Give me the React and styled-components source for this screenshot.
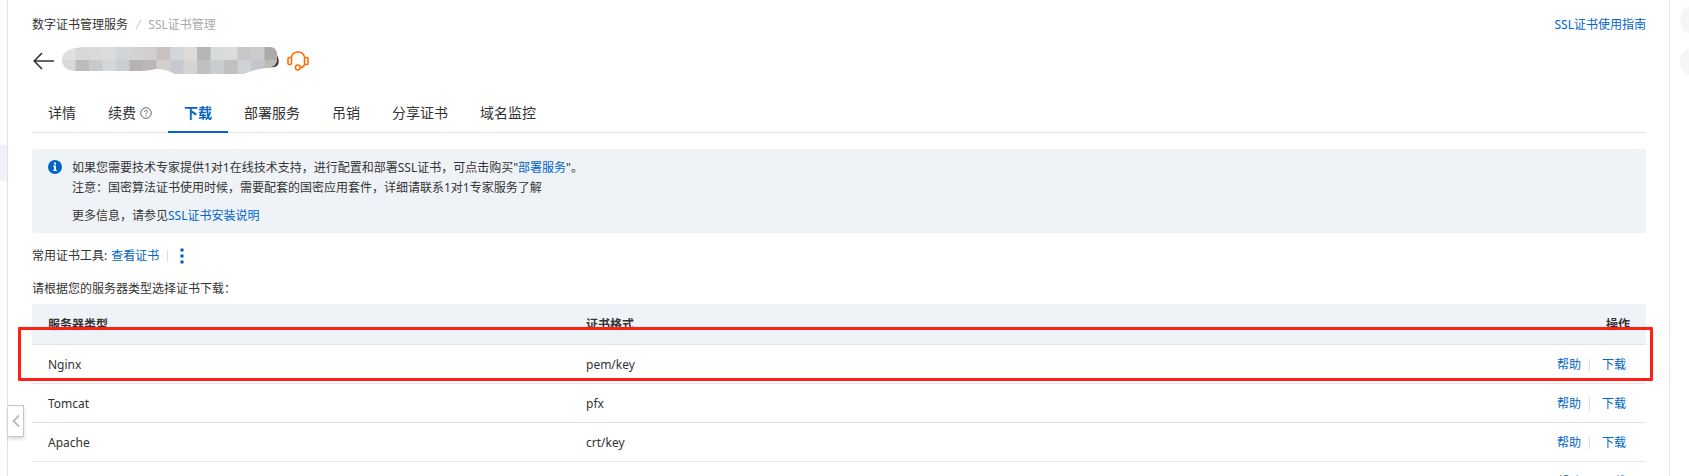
import React from 'react';
import styled, { createGlobalStyle } from 'styled-components';

const tabs = [
  { name: '详情' },
  { name: '续费', help: true },
  { name: '下载', active: true },
  { name: '部署服务' },
  { name: '吊销' },
  { name: '分享证书' },
  { name: '域名监控' },
];

const servers = [
  { type: 'Nginx', format: 'pem/key' },
  { type: 'Tomcat', format: 'pfx' },
  { type: 'Apache', format: 'crt/key' },
  { type: '', format: '' },
];

// Blurred certificate name, one colour per mosaic block
const mosaic = [
  ['#e0e0e0', '#d6d8d8', '#dadadc', '#d9dbdd', '#d2d5d8', '#d5d2d3', '#d2cdce', '#c8c3bf', '#d3d6d9', '#dddad8', '#b5b5b9', '#d7dbdc', '#dcdcdb', '#c7c7c9', '#cbcbcb', '#afa9aa'],
  ['#d8d8d6', '#bcbcbb', '#c9cac9', '#d4d7da', '#c9ced1', '#b8b1b3', '#bdb7b9', '#d2d0ca', '#c6c9cf', '#d6d4d2', '#c0c0c1', '#c9cdcf', '#c2c0bf', '#cfd1d6', '#c3c7cb', '#bdbab6'],
];

const App = () => {
  return (
    <Shell>
      <GlobalStyle />
      <SideNav>
        <SideNavActive />
      </SideNav>

      <Main>
        <CollapseButton type="button" aria-label="收起">
          <svg width="8" height="14" viewBox="0 0 8 14" fill="none" stroke="#bbb" strokeWidth="2">
            <path d="M7 1.5 1.5 7 7 12.5" />
          </svg>
        </CollapseButton>

        <TopBar>
          <Breadcrumb>
            <a href="#service">数字证书管理服务</a>
            <i>/</i>
            <span>SSL证书管理</span>
          </Breadcrumb>
          <TextLink href="#guide">SSL证书使用指南</TextLink>
        </TopBar>

        <TitleRow>
          <IconButton type="button" aria-label="返回">
            <svg width="22" height="18" viewBox="0 0 22 18" fill="none" stroke="#333" strokeWidth="1.6">
              <path d="M22 9H2.500M10 1 2.200 9l7.800 8" />
            </svg>
          </IconButton>
          <MaskedName />
          <IconButton type="button" aria-label="客服">
            <Headset />
          </IconButton>
        </TitleRow>

        <Tabs role="tablist">
          {tabs.map((tab) => (
            <Tab key={tab.name} type="button" role="tab" aria-selected={!!tab.active} $active={tab.active}>
              {tab.name}
              {tab.help && <HelpIcon />}
            </Tab>
          ))}
        </Tabs>

        <Notice>
          <InfoIcon />
          <div>
            <p>
              如果您需要技术专家提供1对1在线技术支持，进行配置和部署SSL证书，可点击购买"
              <TextLink href="#deploy">部署服务</TextLink>"。
            </p>
            <p>注意：国密算法证书使用时候，需要配套的国密应用套件，详细请联系1对1专家服务了解</p>
            <NoticeMore>
              更多信息，请参见<TextLink href="#install">SSL证书安装说明</TextLink>
            </NoticeMore>
          </div>
        </Notice>

        <Tools>
          <span>常用证书工具:</span>
          <TextLink href="#view">查看证书</TextLink>
          <Divider />
          <IconButton type="button" aria-label="更多">
            <svg width="4" height="16" viewBox="0 0 4 16" fill="#0064c8">
              <circle cx="2" cy="2" r="1.800" />
              <circle cx="2" cy="8" r="1.800" />
              <circle cx="2" cy="14" r="1.800" />
            </svg>
          </IconButton>
        </Tools>

        <Hint>请根据您的服务器类型选择证书下载：</Hint>

        <TableWrap>
          <Table>
            <thead>
              <tr>
                <th>服务器类型</th>
                <th>证书格式</th>
                <th>操作</th>
              </tr>
            </thead>
            <tbody>
              {servers.map((server, index) => (
                <tr key={index}>
                  <td>{server.type}</td>
                  <td>{server.format}</td>
                  <td>
                    <Actions>
                      <TextLink href="#help">帮助</TextLink>
                      <Divider />
                      <TextButton type="button">下载</TextButton>
                    </Actions>
                  </td>
                </tr>
              ))}
            </tbody>
          </Table>
          <Highlight />
        </TableWrap>
      </Main>

      <RightRail>
        <RailButton type="button" aria-label="消息" />
        <RailButton type="button" aria-label="工具" />
      </RightRail>
    </Shell>
  );
};

const MaskedName = () => (
  <svg width="217" height="28" viewBox="0 0 217 28" role="img" aria-label="证书名称">
    <clipPath id="brush">
      <path d="M13 1Q20 0 28 0H208Q215 0 215 8V14Q214 21 204 21Q190 23 182 27H113Q104 22 94 22Q86 24 78 24H12Q0 23 0 12Q1 3 13 1Z" />
    </clipPath>
    <path d="M206 20Q215 19 215 8Q221 22 206 20Z" fill="#333" />
    <g clipPath="url(#brush)">
      {mosaic.map((row, y) =>
        row.map((color, x) => (
          <rect key={`${x}-${y}`} x={x * 13.5} y={y * 13} width="14" height="15" fill={color} />
        ))
      )}
    </g>
  </svg>
);

const Headset = () => (
  <svg width="22" height="20" viewBox="0 0 22 20" fill="none" stroke="#ff6a00" strokeWidth="1.500">
    <path d="M4.500 6.500C5 3 7.500 1 11 1s6 2 6.500 5.500M17.500 13.500c-.5 1.800-2 3-4.300 3.200" />
    <rect x="1" y="6.500" width="3.500" height="7" rx="1" />
    <rect x="17.500" y="6.500" width="3.500" height="7" rx="1" />
    <circle cx="10.800" cy="16.500" r="2.400" />
  </svg>
);

const HelpIcon = () => (
  <svg width="12" height="12" viewBox="0 0 12 12" fill="none" stroke="#666">
    <circle cx="6" cy="6" r="5.300" />
    <path d="M4.500 5c0-2.200 3-2.200 3-.2C7.500 5.800 6 6 6 7.200M6 8.200v1" />
  </svg>
);

const InfoIcon = () => (
  <svg width="14" height="14" viewBox="0 0 14 14">
    <circle cx="7" cy="7" r="7" fill="#0064c8" />
    <path d="M6 2.500h2v2H6zM5 5.500h3V10h1v1H5v-1h1V6.500H5z" fill="#fff" />
  </svg>
);

const GlobalStyle = createGlobalStyle`
  * {
    box-sizing: border-box;
  }

  body {
    margin: 0;
    background: #fff;
    color: #333;
    font-family: "Noto Sans", "Noto Sans CJK SC", sans-serif;
    font-size: 12px;
    line-height: 20px;
  }

  button {
    padding: 0;
    border: 0;
    background: none;
    font: inherit;
    color: inherit;
    cursor: pointer;
  }

  p {
    margin: 0;
  }
`;

const Shell = styled.div`
  display: flex;
  height: 100vh;
  overflow: hidden;
`;

const SideNav = styled.aside`
  flex: 0 0 8px;
  padding-top: 145px;
  border-right: 1px solid #dfe1e4;
`;

const SideNavActive = styled.div`
  height: 36px;
  background: #eff3f8;
`;

const Main = styled.main`
  position: relative;
  flex: 1;
  min-width: 0;
  padding: 15px 23px 0 24px;
`;

const CollapseButton = styled.button`
  position: absolute;
  left: 0;
  top: 405px;
  display: flex;
  align-items: center;
  justify-content: center;
  width: 16px;
  height: 32px;
  border: 1px solid #c0c6cc;
  border-left: 0;
  background: #fff;
  box-shadow: 0 2px 4px rgba(0, 0, 0, 0.16);
`;

const TextLink = styled.a`
  color: #0064c8;
  text-decoration: none;
`;

const TextButton = styled.button`
  color: #0064c8;
`;

const TopBar = styled.header`
  display: flex;
  justify-content: space-between;
`;

const Breadcrumb = styled.nav`
  display: flex;
  gap: 8px;

  a {
    color: #333;
    text-decoration: none;
  }

  i {
    color: #ccc;
  }

  span {
    color: #aaa;
  }
`;

const TitleRow = styled.div`
  display: flex;
  align-items: center;
  gap: 8px;
  height: 28px;
  margin-top: 12px;
`;

const IconButton = styled.button`
  display: flex;
  align-items: center;
`;

const Tabs = styled.div`
  display: flex;
  height: 40px;
  margin-top: 18px;
  border-bottom: 1px solid #e3e4e6;
`;

const Tab = styled.button`
  display: flex;
  align-items: center;
  gap: 4px;
  height: 40px;
  padding: 2px 16px 0;
  border-bottom: 2px solid ${(props) => (props.$active ? '#0064c8' : 'transparent')};
  color: ${(props) => (props.$active ? '#0064c8' : '#333')};
  font-size: 14px;
  font-weight: ${(props) => (props.$active ? 700 : 400)};
`;

const Notice = styled.section`
  display: flex;
  gap: 10px;
  margin-top: 16px;
  padding: 9px 16px 7px;
  border-radius: 2px;
  background: #eff3f8;

  svg {
    flex-shrink: 0;
    margin-top: 2px;
  }
`;

const NoticeMore = styled.p`
  margin-top: 8px;
`;

const Tools = styled.div`
  display: flex;
  align-items: center;
  gap: 4px;
  margin-top: 13px;
`;

const Divider = styled.span`
  width: 1px;
  height: 12px;
  margin: 0 8px 0 4px;
  background: #ddd;
`;

const Hint = styled.p`
  margin-top: 13px;
`;

const TableWrap = styled.div`
  position: relative;
  margin-top: 5px;
`;

const Table = styled.table`
  width: 100%;
  border-collapse: separate;
  border-spacing: 0;
  table-layout: fixed;

  th,
  td {
    height: 39px;
    padding: 2px 16px 0;
    border-bottom: 1px solid #e3e4e6;
    text-align: left;
  }

  th {
    height: 41px;
    background: #eff3f8;
    font-weight: 700;
  }

  th:last-child {
    text-align: right;
  }
`;

const Actions = styled.div`
  display: flex;
  align-items: center;
  justify-content: flex-end;
  gap: 4px;
  padding-right: 4px;
`;

// Red frame round the Nginx row
const Highlight = styled.div`
  position: absolute;
  top: 23px;
  left: -14px;
  right: -7px;
  height: 54px;
  border: 3px solid #ff2015;
  border-radius: 1px;
  pointer-events: none;
`;

const RightRail = styled.aside`
  display: flex;
  flex: 0 0 20px;
  flex-direction: column;
  gap: 12px;
  min-width: 0;
  padding: 5px 0 0 10px;
  border-left: 1px solid #e3e4e6;
`;

const RailButton = styled.button`
  flex-shrink: 0;
  width: 30px;
  height: 30px;
  border-radius: 50%;
  background: #f5f6f7;
`;

export default App;
